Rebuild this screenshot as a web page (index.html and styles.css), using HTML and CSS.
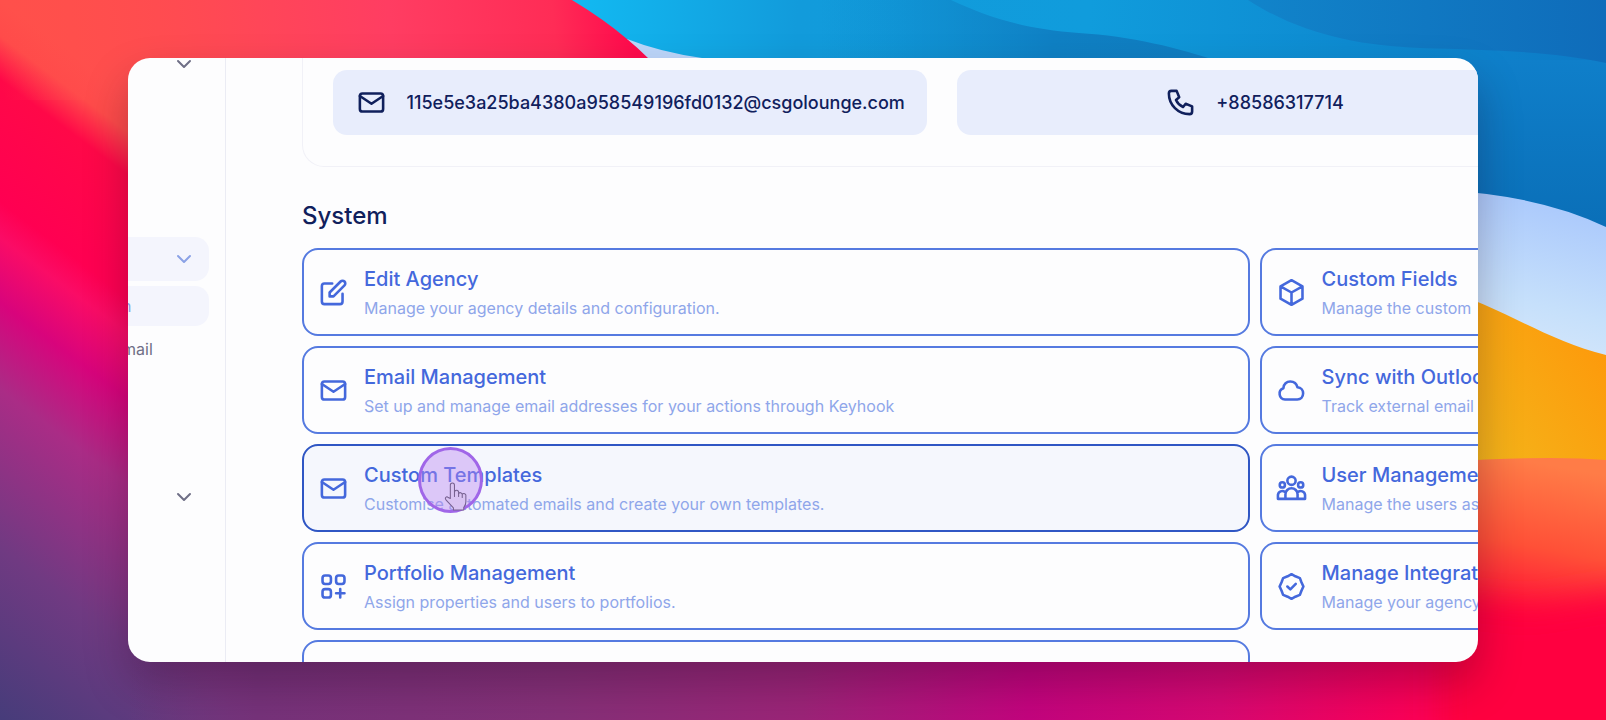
FILE: index.html
```html
<!DOCTYPE html>
<html lang="en">
<head>
<meta charset="utf-8">
<title>System settings</title>
<link rel="stylesheet" href="styles.css">
</head>
<body>
<svg class="wallpaper" viewBox="0 0 1606 720" preserveAspectRatio="none" aria-hidden="true">
  <defs>
    <linearGradient id="dusk" gradientUnits="userSpaceOnUse" x1="0" y1="0" x2="-346" y2="461">
      <stop offset="0" stop-color="#ff504b"/>
      <stop offset=".05" stop-color="#ff4b4a"/>
      <stop offset=".11" stop-color="#ff0848"/>
      <stop offset=".28" stop-color="#ff0052"/>
      <stop offset=".33" stop-color="#fa0c66"/>
      <stop offset=".42" stop-color="#d8047c"/>
      <stop offset=".54" stop-color="#aa2c86"/>
      <stop offset=".76" stop-color="#703a82"/>
      <stop offset="1" stop-color="#463c7a"/>
    </linearGradient>
    <linearGradient id="base" x1="0" x2="1" y1="0" y2="0">
      <stop offset=".08" stop-color="#70347a" stop-opacity="0"/>
      <stop offset=".16" stop-color="#76327a"/>
      <stop offset=".35" stop-color="#863078"/>
      <stop offset=".5" stop-color="#9c2478"/>
      <stop offset=".64" stop-color="#c4047e"/>
      <stop offset=".76" stop-color="#d80872"/>
      <stop offset=".88" stop-color="#fc0058"/>
      <stop offset="1" stop-color="#ff0044"/>
    </linearGradient>
    <linearGradient id="coralTop" gradientUnits="userSpaceOnUse" x1="0" x2="650" y1="60" y2="0">
      <stop offset="0" stop-color="#ff4f4b" stop-opacity="0"/>
      <stop offset=".4" stop-color="#ff4658"/>
      <stop offset=".6" stop-color="#ff3d62"/>
      <stop offset=".85" stop-color="#ff2c56"/>
      <stop offset=".97" stop-color="#ff0a4c"/>
    </linearGradient>
    <linearGradient id="sky" gradientUnits="userSpaceOnUse" x1="570" x2="1606" y1="0" y2="60">
      <stop offset="0" stop-color="#12baf2"/>
      <stop offset=".22" stop-color="#129bdb"/>
      <stop offset=".5" stop-color="#109cdc"/>
      <stop offset="1" stop-color="#0c7ac6"/>
    </linearGradient>
    <linearGradient id="wave1" gradientUnits="userSpaceOnUse" x1="820" x2="1210" y1="0" y2="0">
      <stop offset="0" stop-color="#0f86c8" stop-opacity="0"/>
      <stop offset=".6" stop-color="#0f80c4"/>
      <stop offset="1" stop-color="#107cc0"/>
    </linearGradient>
    <linearGradient id="right" x1="0" x2="0" y1="0" y2="1">
      <stop offset="0" stop-color="#0f7fca"/>
      <stop offset="1" stop-color="#0868b0"/>
    </linearGradient>
    <linearGradient id="wave2" x1="0" x2="1" y1="0" y2="0">
      <stop offset="0" stop-color="#1184ca"/>
      <stop offset="1" stop-color="#0f6cba"/>
    </linearGradient>
    <linearGradient id="ice" x1=".2" x2="0" y1="0" y2="1">
      <stop offset="0" stop-color="#adcbfc"/>
      <stop offset=".45" stop-color="#c6e0fb"/>
      <stop offset="1" stop-color="#e6eefa"/>
    </linearGradient>
    <linearGradient id="amber" x1="0" x2="1" y1=".8" y2="0">
      <stop offset="0" stop-color="#f3b81c"/>
      <stop offset="1" stop-color="#ff9408"/>
    </linearGradient>
    <linearGradient id="coral" gradientUnits="userSpaceOnUse" x1="1500" x2="1470" y1="456" y2="620">
      <stop offset="0" stop-color="#ff7c47"/>
      <stop offset=".5" stop-color="#ff5037"/>
      <stop offset="1" stop-color="#ff0238"/>
    </linearGradient>
    <filter id="soft" x="-30%" y="-30%" width="160%" height="160%"><feGaussianBlur stdDeviation="16"/></filter>
  </defs>
  <rect width="1606" height="720" fill="url(#dusk)"/>
  <path d="M0 600H1606V720H0Z" fill="url(#base)"/>
  <path d="M0 0H720V100H0Z" fill="url(#coralTop)"/>
  <path d="M627 39 660 34 740 60V70H654L648 58Q638 48 627 39Z" fill="#bcd6fa"/>
  <path d="M572 0Q605 20 627 39 660 52 702 58L740 66H1606V0Z" fill="url(#sky)"/>
  <path d="M820 0H951C985 16 1023 29 1079 33 1130 36 1180 48 1220 62H820Z" fill="url(#wave1)"/>
  <path d="M1465 60H1606V300H1465Z" fill="url(#right)"/>
  <path d="M1248 0C1300 34 1360 46 1420 48 1490 50 1550 51 1606 63V0Z" fill="url(#wave2)"/>
  <path d="M1440 190Q1540 195 1606 227V400H1440Z" fill="url(#ice)"/>
  <path d="M1440 288C1500 306 1545 340 1606 355V480H1440Z" fill="url(#amber)"/>
  <path d="M1440 462Q1550 455 1606 460V640H1440Z" fill="url(#coral)"/>
  <path d="M1440 600 1530 610 1640 590V760H1440Z" fill="#ff0040" filter="url(#soft)"/>
</svg>

<svg class="symbols" aria-hidden="true">
  <symbol id="mail" viewBox="0 0 24 24"><rect x="3" y="5" width="18" height="14" rx="2"/><path d="m3 7 9 6 9-6"/></symbol>
  <symbol id="phone" viewBox="0 0 24 24"><path d="M5 3h4l2 5-2.500 2a11 11 0 0 0 5.500 5.500l2-2.500 5 2v4a2 2 0 0 1-2 2A16 16 0 0 1 3 5a2 2 0 0 1 2-2Z"/></symbol>
  <symbol id="edit" viewBox="0 0 24 24"><path d="M11 5H5a2 2 0 0 0-2 2v12a2 2 0 0 0 2 2h12a2 2 0 0 0 2-2v-6"/><path d="M9 15v-3l8.500-8.500a2.100 2.100 0 0 1 3 3L12 15Z"/></symbol>
  <symbol id="box" viewBox="0 0 24 24"><path d="m12 2.500 8.500 4.700v9.600L12 21.500l-8.500-4.700V7.200ZM12 12l8.500-4.800M12 12v9.500M12 12 3.500 7.200"/></symbol>
  <symbol id="cloud" viewBox="0 0 24 24"><path d="M7 19a4.500 4.500 0 0 1-1.300-8.700C5.800 7 8.400 5 11 5c3 0 5 1.800 5.600 4.500C19.500 9.700 21 12 21 14.200 21 17 19 19 16.500 19Z"/></symbol>
  <symbol id="users" viewBox="0 0 24 24"><circle cx="12" cy="6" r="3.200"/><circle cx="4.900" cy="9.200" r="2"/><circle cx="19.100" cy="9.200" r="2"/><path d="M7.300 20v-3.500a4.700 4.700 0 0 1 9.400 0V20M7.300 20H1.500v-3a3.300 3.300 0 0 1 5.500-2.200M16.700 20h5.800v-3a3.300 3.300 0 0 0-5.500-2.200M7.300 20h9.400"/></symbol>
  <symbol id="grid" viewBox="0 0 24 24"><rect x="3.500" y="3.500" width="6.500" height="6.500" rx="2"/><rect x="14" y="3.500" width="6.500" height="6.500" rx="2"/><rect x="3.500" y="14" width="6.500" height="6.500" rx="2"/><path d="M17.200 14v6.500M14 17.200h6.500"/></symbol>
  <symbol id="badge" viewBox="0 0 24 24"><path d="m12 2.500 3 1.600 3.500 1.400 1.200 3.200 1.500 3.300-1.500 3.300-1.200 3.200-3.500 1.400-3 1.600-3-1.600-3.500-1.400-1.200-3.200L2.800 12l1.500-3.300 1.200-3.200L9 4.100Z"/><path d="m8.800 12 2.300 2.200 4.200-4.200"/></symbol>
  <symbol id="chevron" viewBox="0 0 24 24"><path d="m6 9 6 6 6-6"/></symbol>
</svg>

<div class="window">
  <nav class="sidebar" aria-label="Main">
    <button class="group" aria-label="Expand section"><svg class="chevron"><use href="#chevron"/></svg></button>
    <button class="group active" aria-label="Collapse section"><svg class="chevron"><use href="#chevron"/></svg></button>
    <a class="item current" href="#">n</a>
    <a class="item" href="#">mail</a>
    <button class="group last" aria-label="Expand section"><svg class="chevron"><use href="#chevron"/></svg></button>
  </nav>
  <main class="content">
    <section class="contacts" aria-label="Contact details">
      <a class="chip" href="#"><svg class="icon"><use href="#mail"/></svg><span>115e5e3a25ba4380a958549196fd0132@csgolounge.com</span></a>
      <a class="chip" href="#"><svg class="icon"><use href="#phone"/></svg><span>+88586317714</span></a>
    </section>
    <h2 class="heading">System</h2>
    <section class="cards">
      <a class="card" href="#"><svg class="icon"><use href="#edit"/></svg><span class="copy"><strong class="title">Edit Agency</strong><span class="desc">Manage your agency details and configuration.</span></span></a>
      <a class="card" href="#"><svg class="icon"><use href="#box"/></svg><span class="copy"><strong class="title">Custom Fields</strong><span class="desc">Manage the custom</span></span></a>
      <a class="card" href="#"><svg class="icon"><use href="#mail"/></svg><span class="copy"><strong class="title">Email Management</strong><span class="desc">Set up and manage email addresses for your actions through Keyhook</span></span></a>
      <a class="card" href="#"><svg class="icon"><use href="#cloud"/></svg><span class="copy"><strong class="title">Sync with Outlook</strong><span class="desc">Track external email</span></span></a>
      <a class="card hovered" href="#"><svg class="icon"><use href="#mail"/></svg><span class="copy"><strong class="title">Custom Templates</strong><span class="desc">Customise automated emails and create your own templates.</span></span>
        <span class="pointer"><svg class="hand" viewBox="0 0 22 28"><path d="M6 16V3a2 2 0 0 1 4 0v7a2 2 0 0 1 4 0v1a2 2 0 0 1 3.500.800A2 2 0 0 1 21 13.500V19c0 3-1 4-2 5.500V27H9v-2L2 17.500c-2-2.500.500-4 2-2.500Z"/><path d="M10 10v4M14 11v3M17.500 12v3"/></svg></span></a>
      <a class="card" href="#"><svg class="icon"><use href="#users"/></svg><span class="copy"><strong class="title">User Management</strong><span class="desc">Manage the users as</span></span></a>
      <a class="card" href="#"><svg class="icon"><use href="#grid"/></svg><span class="copy"><strong class="title">Portfolio Management</strong><span class="desc">Assign properties and users to portfolios.</span></span></a>
      <a class="card" href="#"><svg class="icon"><use href="#badge"/></svg><span class="copy"><strong class="title">Manage Integrations</strong><span class="desc">Manage your agency</span></span></a>
      <a class="card" href="#" aria-label="More settings"></a>
    </section>
  </main>
</div>
</body>
</html>
```
FILE: styles.css
```css
* { box-sizing: border-box; }

body {
  margin: 0;
  height: 100vh;
  padding: 58px 128px;
  display: flex;
  overflow: hidden;
  font-family: Inter, "Open Sans", sans-serif;
}

a { color: inherit; text-decoration: none; }
button { border: 0; background: none; padding: 0; font: inherit; color: inherit; }
svg { fill: none; stroke: currentColor; stroke-width: 2; stroke-linecap: round; stroke-linejoin: round; }

.wallpaper {
  position: absolute;
  inset: 0;
  width: 100%;
  height: 100%;
  z-index: -1;
  stroke: none;
}
.symbols { position: absolute; width: 0; height: 0; }

.window {
  flex: 1;
  display: flex;
  overflow: hidden;
  border-radius: 22px;
  background: #fdfdfe;
  box-shadow: 0 22px 44px rgba(30, 0, 30, .28);
}

.sidebar {
  flex: none;
  width: 98px;
  padding-right: 16px;
  border-right: 1px solid #ebecf4;
  display: flex;
  flex-direction: column;
  color: #6f6f86;
}
.group {
  flex: none;
  height: 44px;
  padding-right: 13px;
  display: flex;
  align-items: center;
  justify-content: flex-end;
  margin-top: -16px;
}
.group.active {
  margin-top: 151px;
  border-radius: 0 14px 14px 0;
  background: #f4f5fd;
  color: #8ba2e6;
}
.group.last { margin-top: 106px; }
.chevron { width: 24px; height: 24px; }
.item {
  height: 40px;
  margin-top: 5px;
  border-radius: 0 14px 14px 0;
  font-size: 16px;
  line-height: 40px;
  text-indent: -6px;
}
.item.current { background: #f4f5fd; color: #8ba2e6; }
.item.current + .item { margin-top: 3px; }

.content {
  flex: 1;
  min-width: 0;
  padding-left: 76px;
}
.contacts, .cards { width: 162%; display: grid; }
.contacts {
  grid-template-columns: repeat(3, 1fr);
  gap: 30px;
  padding: 12px 30px 31px;
  border: 1px solid #f1f1f7;
  border-top: 0;
  border-radius: 0 0 22px 22px;
}
.chip {
  height: 65px;
  border-radius: 14px;
  background: #e8edfc;
  color: #10205c;
  display: flex;
  align-items: center;
  justify-content: center;
  gap: 20px;
  font-size: 18px;
  font-weight: 500;
}
.icon { flex: none; width: 31px; height: 31px; }

.heading {
  margin: 31px 0 14px;
  font-size: 24px;
  line-height: 36px;
  font-weight: 500;
  color: #10205c;
}

.cards {
  grid-template-columns: 1fr 1fr;
  grid-auto-rows: 88px;
  gap: 10px;
}
.card {
  position: relative;
  display: flex;
  align-items: center;
  gap: 15px;
  padding: 0 14px;
  border: 2px solid #557ae0;
  border-radius: 16px;
  color: #4468dc;
}
.card.hovered { border-color: #2f56c4; background: #f5f7fd; }
.copy { display: flex; flex-direction: column; gap: 2px; padding-top: 2px; }
.title { font-size: 20px; line-height: 28px; font-weight: 500; }
.desc { font-size: 16px; line-height: 26px; color: #8fa6ea; }

.pointer {
  position: absolute;
  top: 1px;
  left: 114px;
  width: 65px;
  height: 66px;
  border: 3px solid #a066e8;
  border-radius: 50%;
  background: rgba(187, 134, 240, .42);
}
.hand {
  position: absolute;
  left: 23px;
  top: 32px;
  width: 23px;
  height: 29px;
  fill: #d9c3f2;
  stroke: #76608f;
  stroke-width: 1;
}
```
